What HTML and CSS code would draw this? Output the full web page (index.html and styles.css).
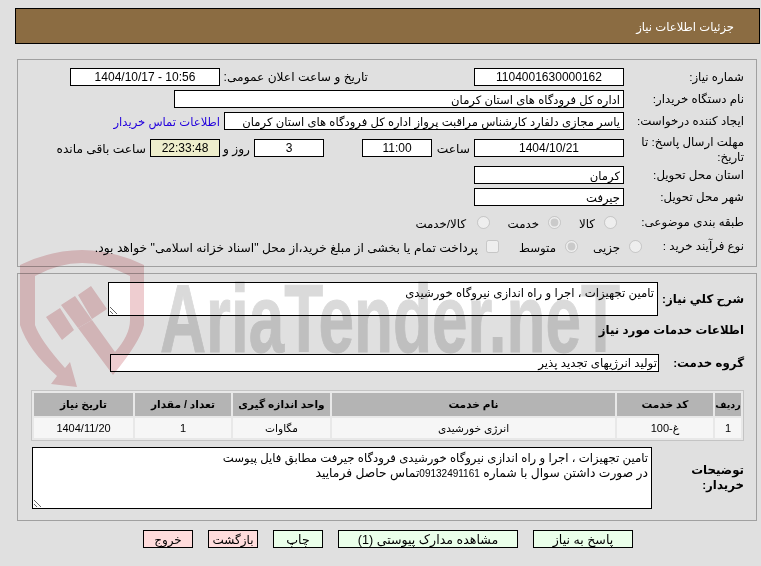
FILE: index.html
```html
<!DOCTYPE html>
<html lang="fa" dir="rtl">
<head>
<meta charset="utf-8">
<title>جزئیات اطلاعات نیاز</title>
<link rel="stylesheet" href="styles.css">
</head>
<body>
<header class="title-bar"><span>جزئیات اطلاعات نیاز</span></header>

<section class="panel panel-top">
  <div class="row">
    <div class="label">شماره نیاز:</div>
    <div class="box w150 center num">1104001630000162</div>
    <div class="label-inline ann">تاریخ و ساعت اعلان عمومی:</div>
    <div class="box w150 center num" dir="ltr">1404/10/17 - 10:56</div>
  </div>
  <div class="row">
    <div class="label">نام دستگاه خریدار:</div>
    <div class="box w450">اداره کل فرودگاه های استان کرمان</div>
  </div>
  <div class="row">
    <div class="label">ایجاد کننده درخواست:</div>
    <div class="box w400">یاسر مجازی دلفارد کارشناس مراقبت پرواز اداره کل فرودگاه های استان کرمان</div>
    <a class="contact" href="#">اطلاعات تماس خریدار</a>
  </div>
  <div class="row row-deadline">
    <div class="label">مهلت ارسال پاسخ: تا تاریخ:</div>
    <div class="box w150 center num">1404/10/21</div>
    <div class="label-inline hour">ساعت</div>
    <div class="box w70 center num">11:00</div>
    <div class="box w70 center num gap-days">3</div>
    <div class="label-inline days">روز و</div>
    <div class="box w70 center num remain">22:33:48</div>
    <div class="label-inline left">ساعت باقی مانده</div>
  </div>
  <div class="row">
    <div class="label">استان محل تحویل:</div>
    <div class="box w150">کرمان</div>
  </div>
  <div class="row">
    <div class="label">شهر محل تحویل:</div>
    <div class="box w150">جیرفت</div>
  </div>
  <div class="row row-radio">
    <div class="label">طبقه بندی موضوعی:</div>
    <label class="opt o-kala"><input type="radio" disabled><span>کالا</span></label>
    <label class="opt o-khedmat"><input type="radio" disabled checked><span>خدمت</span></label>
    <label class="opt o-both"><input type="radio" disabled><span>کالا/خدمت</span></label>
  </div>
  <div class="row row-radio row-process">
    <div class="label">نوع فرآیند خرید :</div>
    <label class="opt o-jozi"><input type="radio" disabled><span>جزیی</span></label>
    <label class="opt o-mot"><input type="radio" disabled checked><span>متوسط</span></label>
    <label class="opt o-pay"><input type="checkbox" disabled><span>پرداخت تمام یا بخشی از مبلغ خرید،از محل "اسناد خزانه اسلامی" خواهد بود.</span></label>
  </div>
</section>

<section class="panel panel-main">
  <div class="row row-desc">
    <div class="label strong">شرح کلي نياز:</div>
    <div class="area area-desc">تامین تجهیزات ، اجرا و راه اندازی نیروگاه خورشیدی</div>
  </div>
  <h2 class="sub">اطلاعات خدمات مورد نياز</h2>
  <div class="row row-group">
    <div class="label strong">گروه خدمت:</div>
    <div class="box w549">تولید انرژیهای تجدید پذیر</div>
  </div>
  <table class="items">
    <colgroup><col class="c1"><col class="c2"><col class="c3"><col class="c4"><col class="c5"><col class="c6"></colgroup>
    <thead>
      <tr><th class="th-row">ردیف</th><th>کد خدمت</th><th>نام خدمت</th><th>واحد اندازه گیری</th><th>تعداد / مقدار</th><th>تاریخ نیاز</th></tr>
    </thead>
    <tbody>
      <tr><td class="num">1</td><td class="num">غ-100</td><td>انرژی خورشیدی</td><td>مگاوات</td><td class="num">1</td><td class="num">1404/11/20</td></tr>
    </tbody>
  </table>
  <div class="row row-notes">
    <div class="label strong">توضیحات خریدار:</div>
    <div class="area area-notes">تامین تجهیزات ، اجرا و راه اندازی نیروگاه خورشیدی فرودگاه جیرفت مطابق فایل پیوست<br><span class="line2">در صورت داشتن سوال با شماره <span class="phone">09132491161</span>تماس حاصل فرمایید</span></div>
  </div>
</section>

<nav class="actions">
  <button class="btn green">پاسخ به نیاز</button>
  <button class="btn green wide">مشاهده مدارک پیوستی (1)</button>
  <button class="btn green short">چاپ</button>
  <button class="btn pink short">بازگشت</button>
  <button class="btn pink short">خروج</button>
</nav>

<svg class="watermark" viewBox="0 0 761 566" width="761" height="566" aria-hidden="true">
  <path class="wm-shield" d="M20 265 Q82 235 144 265 L144 325 Q140 342 113 375 L78 328 L92 320 L115 352 Q130 335 130 320 L130 276 Q82 250 35 276 L35 325 Q40 340 65 368 L70 362 L77 387 L51 384 L57 376 Q28 350 20 325 Z"/>
  <path class="wm-shield" d="M46 317 L60 308 L74 330 L62 340 Z M61 305 L75 296 L92 320 L78 328 Z M78 295 L91 286 L107 309 L92 319 Z"/>
  <text class="wm-text" x="160" y="352" textLength="460" lengthAdjust="spacingAndGlyphs">AriaTender.neT</text>
</svg>
</body>
</html>
```
FILE: styles.css
```css
* { box-sizing: border-box; }
html, body { margin: 0; padding: 0; }
body {
  position: relative;
  width: 761px;
  height: 566px;
  overflow: hidden;
  background: #e0e0e0;
  font-family: "Liberation Sans", "DejaVu Sans", sans-serif;
  font-size: 11.6px;
  line-height: 15px;
  color: #000;
  padding: 8px 1px 0 0;
}
.watermark {
  position: absolute;
  left: 0;
  top: 0;
  z-index: 2;
  pointer-events: none;
  direction: ltr;
  mix-blend-mode: multiply;
}
.wm-shield { fill: #eecdd0; }
.wm-text {
  fill: #dadada;
  stroke: #dadada;
  stroke-width: 1px;
  direction: ltr;
  font-family: "Liberation Sans Narrow", "Liberation Sans", sans-serif;
  font-weight: 700;
  font-size: 96px;
}
.title-bar {
  height: 36px;
  width: 745px;
  background: #8b6c42;
  border: 1px solid #000;
  color: #fff;
  padding: 10px 25px 0 0;
}
.panel {
  position: relative;
  width: 740px;
  margin-right: 3px;
  border: 1px solid #a0a0a0;
  padding: 8px 12px 0 0;
}
.panel-top { margin-top: 15px; height: 208px; }
.panel-main { margin-top: 6px; height: 248px; }
.row { display: flex; align-items: center; margin-bottom: 4px; min-height: 18px; }
.label { width: 120px; flex: none; font-size: 11.8px; }
.label.strong { font-weight: 700; }
.box {
  height: 18px;
  flex: none;
  border: 1px solid #000;
  background: #fff;
  padding: 0 3px;
  line-height: 17px;
  white-space: nowrap;
  overflow: hidden;
}
.num { font-size: 12px; }
.center { text-align: center; }
.w150 { width: 150px; }
.w70 { width: 70px; }
.w400 { width: 400px; }
.w450 { width: 450px; }
.w549 { width: 549px; margin-right: -35px; padding-right: 1px; font-size: 11.8px; }
.label-inline { flex: none; white-space: nowrap; font-size: 12.2px; }
.ann { margin-right: 106px; width: 148px; }
.contact { margin-right: 4px; color: #2200dd; text-decoration: none; white-space: nowrap; }
.row-deadline { align-items: flex-start; margin-top: 5px; margin-bottom: 1px; }
.row-deadline .box { margin-top: 4px; }
.row-deadline .label-inline { margin-top: 7px; }
.hour { width: 42px; padding-right: 4px; }
.gap-days { margin-right: 38px; }
.row-deadline .days { width: 34px; padding-right: 4px; }
.remain { background: #eeeecc; }
.row-deadline .left { margin-right: 4px; }
.row-radio { margin-top: 7px; margin-bottom: 5px; }
.row-process { margin-top: 0; }
.opt { display: flex; align-items: center; white-space: nowrap; flex: none; }
.opt input { margin: 0 0 0 9px; width: 13px; height: 13px; flex: none; }
.opt span { padding-top: 4px; font-size: 11.8px; }
.o-kala { width: 56px; margin-right: 7px; }
.o-khedmat { width: 71px; }
.o-both input { margin-left: 11px; }
.o-jozi { width: 64px; margin-right: -18px; }
.o-mot { width: 79px; }
.o-pay input { margin-left: 8px; }
.o-pay span { font-size: 12.3px; }
.area {
  flex: none;
  border: 1px solid #000;
  background: #fff;
  padding: 2px 3px;
  color: #000;
  overflow: auto;
  resize: both;
  font-size: 11.7px;
  line-height: 15px;
}
.area-desc { width: 550px; height: 34px; margin-right: -34px; }
.row-desc { margin-bottom: 0; }
.sub { margin: 7px 0 0; font-size: 11.8px; line-height: 15px; font-weight: 700; }
.row-group { margin-top: 16px; }
.items {
  width: 713px;
  margin: 18px 0 0;
  border: 1px solid #c4c4c4;
  border-spacing: 2px;
  table-layout: fixed;
  background: #e8e8e8;
}
.items th, .items td { padding: 0; text-align: center; font-size: 10.6px; white-space: nowrap; }
.items th { height: 23px; background: #b4b4b4; font-weight: 700; }
.items th.th-row { font-size: 9.6px; }
.items td { height: 20px; background: #f6f6f6; }
.items td.num { font-size: 11px; }
.c1 { width: 26px; } .c2 { width: 96px; } .c3 { width: 283px; } .c4 { width: 97px; } .c5 { width: 96px; } .c6 { width: 99px; }
.row-notes { margin-top: 6px; }
.row-notes .label { width: 92px; }
.area-notes { width: 620px; height: 62px; }
.line2 { font-size: 12.3px; }
.phone { font-size: 10px; }
.actions {
  display: flex;
  gap: 15px;
  margin: 9px 127px 0 0;
}
.btn {
  height: 18px;
  width: 100px;
  border: 1px solid #000;
  padding: 2px 0 0;
  overflow: visible;
  font: inherit;
  font-size: 12.6px;
  color: #000;
  line-height: 14px;
}
.btn.short { width: 50px; }
.btn.wide { width: 180px; }
.green { background: #eaffea; }
.pink { background: #ffdcdc; font-size: 12px; }
```
